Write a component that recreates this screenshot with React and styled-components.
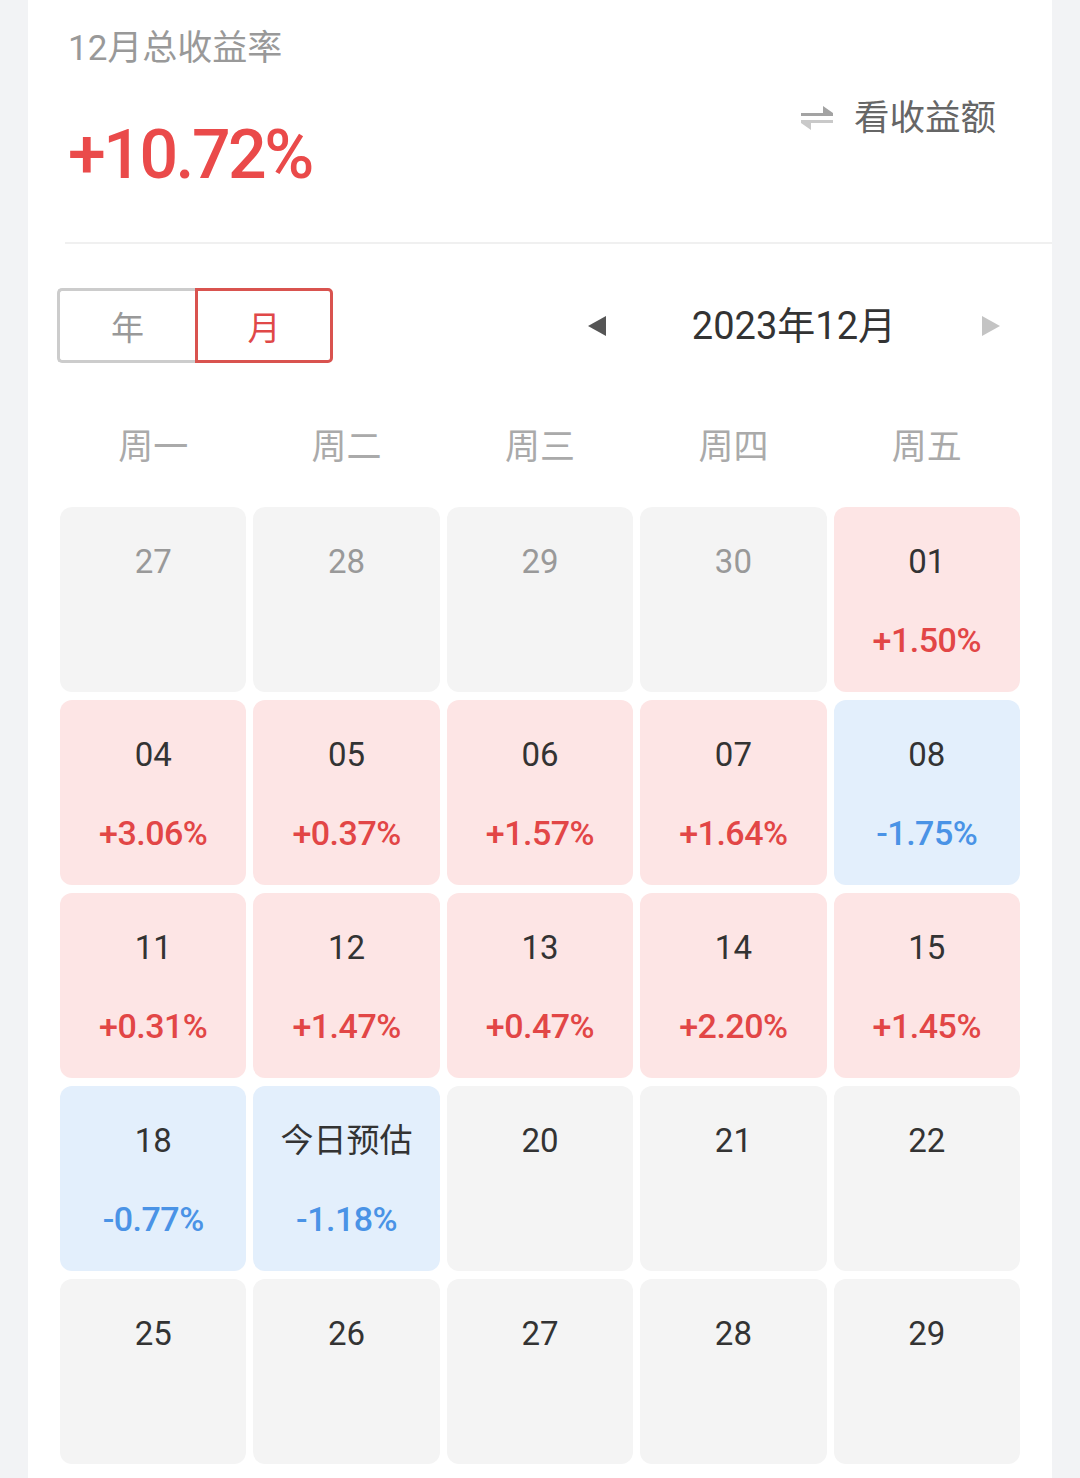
import React from 'react';
import styled, { createGlobalStyle } from 'styled-components';

const GlobalStyle = createGlobalStyle`
    body{
        margin: 0;
        background: #f2f3f5;
        font-family: Roboto, "Noto Sans CJK SC", sans-serif;
    }
`;

const Page = styled.div`
    width: 1080px;
    min-height: 1478px;
    background: #f2f3f5;
`;

const Card = styled.div`
    margin: 0 28px;
    background: #fff;
    min-height: 1478px;
`;

const Header = styled.div`
    display: flex;
    justify-content: space-between;
    align-items: flex-start;
    height: 242px;
    padding: 0 56px 0 40px;
    box-sizing: border-box;
`;

const Title = styled.div`
    margin-top: 29px;
    font-size: 35px;
    line-height: 40px;
    color: #999;
`;

const Total = styled.div`
    margin-top: 46px;
    font-size: 68px;
    line-height: 80px;
    font-weight: 500;
    letter-spacing: -2.5px;
    color: #ea4a4a;
`;

const Toggle = styled.div`
    display: flex;
    align-items: center;
    gap: 20px;
    margin-top: 98px;
    font-size: 35.5px;
    line-height: 40px;
    color: #666;
`;

const Divider = styled.div`
    height: 2px;
    margin-left: 37px;
    background: #f0f0f0;
`;

const Body = styled.div`
    padding: 0 32px 0 32px;
`;

const Toolbar = styled.div`
    display: flex;
    justify-content: space-between;
    align-items: center;
    margin: 44px 20px 0 -3px;
`;

const Segment = styled.div`
    display: flex;
    height: 75px;
`;

const SegButton = styled.div`
    width: 138px;
    box-sizing: border-box;
    display: flex;
    align-items: center;
    justify-content: center;
    font-size: 33px;
    color: ${p => (p.active ? '#e04848' : '#999')};
    border: 3px solid ${p => (p.active ? '#d9534f' : '#ccc')};
    border-right-width: ${p => (p.active ? '3px' : '0')};
    border-radius: ${p => (p.active ? '0 5px 5px 0' : '5px 0 0 5px')};
`;

const Nav = styled.div`
    display: flex;
    align-items: center;
    gap: 86px;
`;

const MonthLabel = styled.div`
    font-size: 38px;
    line-height: 44px;
    color: #333;
`;

const Weekdays = styled.div`
    display: grid;
    grid-template-columns: repeat(5, 1fr);
    column-gap: 7px;
    margin: 65px 0 39px;
`;

const Weekday = styled.div`
    text-align: center;
    font-size: 35px;
    line-height: 40px;
    color: #aaa;
`;

const Grid = styled.div`
    display: grid;
    grid-template-columns: repeat(5, 1fr);
    grid-auto-rows: 185px;
    gap: 8px 7px;
`;

const bgs = { gray: '#f4f4f4', up: '#fde5e5', down: '#e3effc' };

const Cell = styled.div`
    border-radius: 12px;
    background: ${p => bgs[p.kind]};
    display: flex;
    flex-direction: column;
    align-items: center;
    padding-top: 35px;
    box-sizing: border-box;
`;

const DayNum = styled.div`
    font-size: 33px;
    line-height: 40px;
    color: ${p => (p.muted ? '#999' : '#333')};
`;

const Rate = styled.div`
    margin-top: 38px;
    font-size: 34px;
    line-height: 40px;
    font-weight: 500;
    letter-spacing: -0.5px;
    color: ${p => (p.kind === 'down' ? '#4a93e6' : '#e24646')};
`;

const SwapIcon = () => (
    <svg width="34" height="26" viewBox="0 0 34 26">
        <path d="M1 8 H33 V11 H1 Z M23 1 L33 8 L23 8 Z" fill="#a3a3a3" />
        <path d="M1 15 H33 V18 H1 Z M1 18 L11 18 L11 25 Z" fill="#c9c9c9" />
    </svg>
);

const Arrow = ({ dir, color }) => (
    <svg width="18" height="20" viewBox="0 0 18 20">
        <path d={dir === 'left' ? 'M0 10 L18 0 L18 20 Z' : 'M18 10 L0 0 L0 20 Z'} fill={color} />
    </svg>
);

const days = [
    { d: '27', muted: true }, { d: '28', muted: true }, { d: '29', muted: true }, { d: '30', muted: true },
    { d: '01', r: '+1.50%' },
    { d: '04', r: '+3.06%' }, { d: '05', r: '+0.37%' }, { d: '06', r: '+1.57%' }, { d: '07', r: '+1.64%' },
    { d: '08', r: '-1.75%' },
    { d: '11', r: '+0.31%' }, { d: '12', r: '+1.47%' }, { d: '13', r: '+0.47%' }, { d: '14', r: '+2.20%' },
    { d: '15', r: '+1.45%' },
    { d: '18', r: '-0.77%' }, { d: '今日预估', r: '-1.18%' }, { d: '20' }, { d: '21' }, { d: '22' },
    { d: '25' }, { d: '26' }, { d: '27' }, { d: '28' }, { d: '29' },
];

const App = () => {
    return (
        <Page>
            <GlobalStyle />
            <Card>
                <Header>
                    <div>
                        <Title>12月总收益率</Title>
                        <Total>+10.72%</Total>
                    </div>
                    <Toggle>
                        <SwapIcon />
                        看收益额
                    </Toggle>
                </Header>
                <Divider />
                <Body>
                    <Toolbar>
                        <Segment>
                            <SegButton>年</SegButton>
                            <SegButton active>月</SegButton>
                        </Segment>
                        <Nav>
                            <Arrow dir="left" color="#555" />
                            <MonthLabel>2023年12月</MonthLabel>
                            <Arrow dir="right" color="#c4c4c4" />
                        </Nav>
                    </Toolbar>
                    <Weekdays>
                        {['周一', '周二', '周三', '周四', '周五'].map(w => <Weekday key={w}>{w}</Weekday>)}
                    </Weekdays>
                    <Grid>
                        {days.map((c, i) => {
                            const kind = !c.r ? 'gray' : c.r[0] === '-' ? 'down' : 'up';
                            return (
                                <Cell key={i} kind={kind}>
                                    <DayNum muted={c.muted}>{c.d}</DayNum>
                                    {c.r && <Rate kind={kind}>{c.r}</Rate>}
                                </Cell>
                            );
                        })}
                    </Grid>
                </Body>
            </Card>
        </Page>
    );
};

export default App;
